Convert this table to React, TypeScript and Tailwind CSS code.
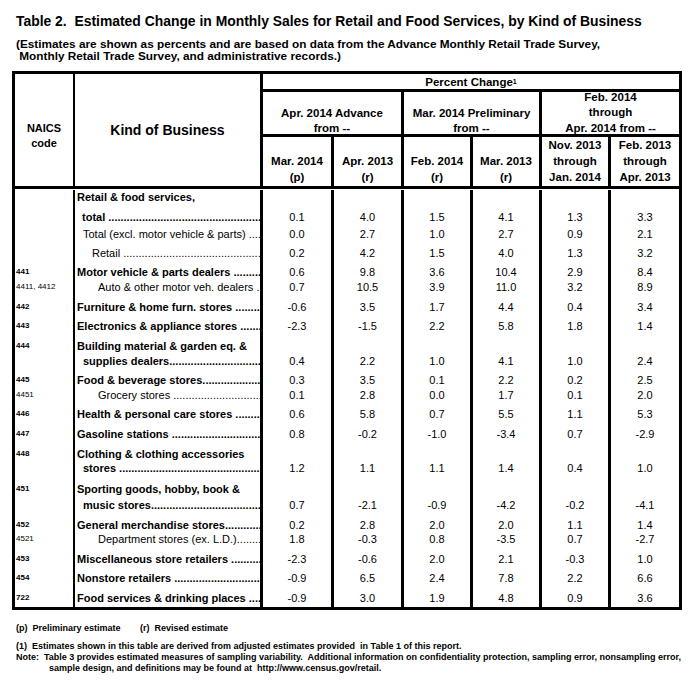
import React from "react";

type Row = {
  h: string;
  code?: string;
  codeBold?: boolean;
  label: string;
  pl: string;
  bold: boolean;
  dots: boolean;
  vals?: string[];
};

const rows: Row[] = [
  { h: "h-[20px]", label: "Retail & food services,", pl: "pl-[2px]", bold: true, dots: false },
  { h: "h-[17px]", label: "total ", pl: "pl-[7px]", bold: true, dots: true, vals: ["0.1", "4.0", "1.5", "4.1", "1.3", "3.3"] },
  { h: "h-[19px]", label: "Total (excl. motor vehicle & parts) ", pl: "pl-[8px]", bold: false, dots: true, vals: ["0.0", "2.7", "1.0", "2.7", "0.9", "2.1"] },
  { h: "h-[19px]", label: "Retail ", pl: "pl-[17px]", bold: false, dots: true, vals: ["0.2", "4.2", "1.5", "4.0", "1.3", "3.2"] },
  { h: "h-[15px]", code: "441", codeBold: true, label: "Motor vehicle & parts dealers ", pl: "pl-[2px]", bold: true, dots: true, vals: ["0.6", "9.8", "3.6", "10.4", "2.9", "8.4"] },
  { h: "h-[20px]", code: "4411, 4412", label: "Auto & other motor veh. dealers ", pl: "pl-[23px]", bold: false, dots: true, vals: ["0.7", "10.5", "3.9", "11.0", "3.2", "8.9"] },
  { h: "h-[19px]", code: "442", codeBold: true, label: "Furniture & home furn. stores ", pl: "pl-[2px]", bold: true, dots: true, vals: ["-0.6", "3.5", "1.7", "4.4", "0.4", "3.4"] },
  { h: "h-[20px]", code: "443", codeBold: true, label: "Electronics & appliance stores ", pl: "pl-[2px]", bold: true, dots: true, vals: ["-2.3", "-1.5", "2.2", "5.8", "1.8", "1.4"] },
  { h: "h-[15px]", code: "444", codeBold: true, label: "Building material & garden eq. &", pl: "pl-[2px]", bold: true, dots: false },
  { h: "h-[19px]", label: "supplies dealers", pl: "pl-[8px]", bold: true, dots: true, vals: ["0.4", "2.2", "1.0", "4.1", "1.0", "2.4"] },
  { h: "h-[15px]", code: "445", codeBold: true, label: "Food & beverage stores", pl: "pl-[2px]", bold: true, dots: true, vals: ["0.3", "3.5", "0.1", "2.2", "0.2", "2.5"] },
  { h: "h-[19px]", code: "4451", label: "Grocery stores ", pl: "pl-[23px]", bold: false, dots: true, vals: ["0.1", "2.8", "0.0", "1.7", "0.1", "2.0"] },
  { h: "h-[20px]", code: "446", codeBold: true, label: "Health & personal care stores ", pl: "pl-[2px]", bold: true, dots: true, vals: ["0.6", "5.8", "0.7", "5.5", "1.1", "5.3"] },
  { h: "h-[20px]", code: "447", codeBold: true, label: "Gasoline stations ", pl: "pl-[2px]", bold: true, dots: true, vals: ["0.8", "-0.2", "-1.0", "-3.4", "0.7", "-2.9"] },
  { h: "h-[14px]", code: "448", codeBold: true, label: "Clothing & clothing accessories", pl: "pl-[2px]", bold: true, dots: false },
  { h: "h-[21px]", label: "stores ", pl: "pl-[8px]", bold: true, dots: true, vals: ["1.2", "1.1", "1.1", "1.4", "0.4", "1.0"] },
  { h: "h-[16px]", code: "451", codeBold: true, label: "Sporting goods, hobby, book &", pl: "pl-[2px]", bold: true, dots: false },
  { h: "h-[20px]", label: "music stores", pl: "pl-[8px]", bold: true, dots: true, vals: ["0.7", "-2.1", "-0.9", "-4.2", "-0.2", "-4.1"] },
  { h: "h-[14px]", code: "452", codeBold: true, label: "General merchandise stores", pl: "pl-[2px]", bold: true, dots: true, vals: ["0.2", "2.8", "2.0", "2.0", "1.1", "1.4"] },
  { h: "h-[20px]", code: "4521", label: "Department stores (ex. L.D.)", pl: "pl-[23px]", bold: false, dots: true, vals: ["1.8", "-0.3", "0.8", "-3.5", "0.7", "-2.7"] },
  { h: "h-[19px]", code: "453", codeBold: true, label: "Miscellaneous store retailers ", pl: "pl-[2px]", bold: true, dots: true, vals: ["-2.3", "-0.6", "2.0", "2.1", "-0.3", "1.0"] },
  { h: "h-[20px]", code: "454", codeBold: true, label: "Nonstore retailers ", pl: "pl-[2px]", bold: true, dots: true, vals: ["-0.9", "6.5", "2.4", "7.8", "2.2", "6.6"] },
  { h: "h-[16px]", code: "722", codeBold: true, label: "Food services & drinking places ", pl: "pl-[2px]", bold: true, dots: true, vals: ["-0.9", "3.0", "1.9", "4.8", "0.9", "3.6"] },
];

const DOTS = ".".repeat(90);

function BodyRow({ r }: { r: Row }) {
  const vals = r.vals ?? ["", "", "", "", "", ""];
  return (
    <div className={`grid grid-cols-[60px_188px_71px_70px_69px_69px_69px_68px] ${r.h}`}>
      <div className={`border-r-2 border-black pl-[1px] text-[8px] leading-[14px] whitespace-nowrap ${r.codeBold ? "font-bold" : ""}`}>
        {r.code}
      </div>
      <div className={`border-r-[3px] border-black flex overflow-hidden whitespace-nowrap text-[11px] leading-[14px] ${r.pl} ${r.bold ? "font-bold" : ""}`}>
        <span className="whitespace-pre shrink-0">{r.label}</span>
        {r.dots && <span className="flex-1 min-w-0 overflow-hidden">{DOTS}</span>}
      </div>
      {vals.map((v, i) => (
        <div
          key={i}
          className={`text-center text-[11px] leading-[14px] ${i < 5 ? "border-r-[3px] border-black" : ""}`}
        >
          {v}
        </div>
      ))}
    </div>
  );
}

export default function App() {
  return (
    <div className="w-[699px] h-[693px] overflow-hidden bg-white text-black font-['Liberation_Sans',Arial,sans-serif]">
      <div className="pt-[12px] pl-[16px]">
        <div className="text-[13.9px] leading-[18px] font-bold whitespace-pre">
          Table 2.  Estimated Change in Monthly Sales for Retail and Food Services, by Kind of Business
        </div>
        <div className="mt-[9px] text-[11.8px] leading-[11.5px] font-bold whitespace-pre">
          <div>(Estimates are shown as percents and are based on data from the Advance Monthly Retail Trade Survey,</div>
          <div> Monthly Retail Trade Survey, and administrative records.)</div>
        </div>
      </div>

      <div className="ml-[12px] mt-[9px] w-[670px] border-[3px] border-black">
        <div className="grid grid-cols-[60px_188px_71px_70px_69px_69px_69px_68px] grid-rows-[18px_45px_49px] border-b-[3px] border-black font-bold text-[11.5px]">
          <div className="row-span-3 border-r-2 border-black flex flex-col items-center justify-center pt-[11px] leading-[15px] text-[11px]">
            <div>NAICS</div>
            <div>code</div>
          </div>
          <div className="row-span-3 border-r-[3px] border-black flex items-center justify-center text-[14px]">
            Kind of Business
          </div>
          <div className="col-span-6 border-b-[3px] border-black flex items-center justify-center leading-[14px]">
            <span>
              Percent Change<sup className="text-[7px] relative -top-[2px]">1</sup>
            </span>
          </div>
          <div className="col-span-2 border-r-[3px] border-b-[3px] border-black flex flex-col items-center justify-end leading-[15px]">
            <div className="-mb-[2px] flex flex-col items-center">
              <div>Apr. 2014 Advance</div>
              <div>from --</div>
            </div>
          </div>
          <div className="col-span-2 border-r-[3px] border-b-[3px] border-black flex flex-col items-center justify-end leading-[15px]">
            <div className="-mb-[2px] flex flex-col items-center">
              <div>Mar. 2014 Preliminary</div>
              <div>from --</div>
            </div>
          </div>
          <div className="col-span-2 border-b-[3px] border-black flex flex-col items-center justify-end leading-[15.5px]">
            <div className="-mb-[2px] flex flex-col items-center">
              <div>Feb. 2014</div>
              <div>through</div>
              <div>Apr. 2014 from --</div>
            </div>
          </div>
          <div className="border-r-[3px] border-black flex flex-col items-center justify-end pb-[1px] leading-[16px]">
            <div>Mar. 2014</div>
            <div>(p)</div>
          </div>
          <div className="border-r-[3px] border-black flex flex-col items-center justify-end pb-[1px] leading-[16px]">
            <div>Apr. 2013</div>
            <div>(r)</div>
          </div>
          <div className="border-r-[3px] border-black flex flex-col items-center justify-end pb-[1px] leading-[16px]">
            <div>Feb. 2014</div>
            <div>(r)</div>
          </div>
          <div className="border-r-[3px] border-black flex flex-col items-center justify-end pb-[1px] leading-[16px]">
            <div>Mar. 2013</div>
            <div>(r)</div>
          </div>
          <div className="border-r-[3px] border-black flex flex-col items-center justify-end pb-[1px] leading-[16px]">
            <div>Nov. 2013</div>
            <div>through</div>
            <div>Jan. 2014</div>
          </div>
          <div className="flex flex-col items-center justify-end pb-[1px] leading-[16px]">
            <div>Feb. 2013</div>
            <div>through</div>
            <div>Apr. 2013</div>
          </div>
        </div>

        <div className="pt-[1px]">
          {rows.map((r, i) => (
            <BodyRow key={i} r={r} />
          ))}
        </div>
      </div>

      <div className="pl-[16px] text-[9px] font-bold whitespace-pre">
        <div className="mt-[13px] leading-[11px] flex">
          <span className="w-[124px]">(p)  Preliminary estimate</span>
          <span>(r)  Revised estimate</span>
        </div>
        <div className="mt-[7px] leading-[11px]">
          (1)  Estimates shown in this table are derived from adjusted estimates provided  in Table 1 of this report.
        </div>
        <div className="leading-[10.5px]">
          <div>Note:  Table 3 provides estimated measures of sampling variability.  Additional information on confidentiality protection, sampling error, nonsampling error,</div>
          <div className="pl-[33px]">sample design, and definitions may be found at  http://www.census.gov/retail.</div>
        </div>
      </div>
    </div>
  );
}
